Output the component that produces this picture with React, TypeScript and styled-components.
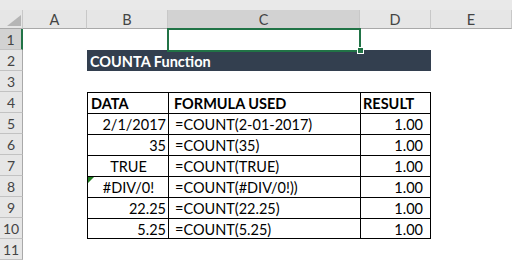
import React, { FC } from 'react'
import styled, { createGlobalStyle, css } from 'styled-components'

const GlobalStyle = createGlobalStyle`
  html, body {
    margin: 0;
    padding: 0;
    background: #ffffff;
  }
  body {
    width: 512px;
    height: 261px;
    overflow: hidden;
  }
`

const GREEN = '#217346'

const Window = styled.div`
  width: 512px;
  height: 261px;
  display: flex;
  flex-direction: column;
  overflow: hidden;
  background: #ffffff;
`

const TopStrip = styled.div`
  height: 10px;
  background: #e9e9e9;
  flex-shrink: 0;
`

const Sheet = styled.div`
  display: grid;
  grid-template-columns: 23px 64px 81px 192px 71px 81px;
  grid-template-rows: 19px repeat(11, 21px);
`

const Corner = styled.div`
  background: #e6e6e6;
  border-right: 1px solid #c8c8c8;
  border-bottom: 1px solid #a9a9a9;
  box-sizing: border-box;
  display: flex;
  align-items: flex-end;
  justify-content: flex-end;
  padding: 0 1px 2px 0;
`

const ColHead = styled.div<{ $selected?: boolean }>`
  background: ${(p) => (p.$selected ? '#d2d2d2' : '#e6e6e6')};
  border-right: 1px solid #c8c8c8;
  border-bottom: 1px solid ${(p) => (p.$selected ? GREEN : '#a9a9a9')};
  box-sizing: border-box;
  display: flex;
  align-items: center;
  justify-content: center;
  font-family: 'Lato', 'Liberation Sans', sans-serif;
  font-size: 14.5px;
  color: #444444;
`

const RowHead = styled.div<{ $selected?: boolean }>`
  background: ${(p) => (p.$selected ? '#d2d2d2' : '#e6e6e6')};
  border-right: ${(p) => (p.$selected ? `2px solid ${GREEN}` : '1px solid #a9a9a9')};
  border-bottom: 1px solid #c2c2c2;
  box-sizing: border-box;
  display: flex;
  align-items: center;
  justify-content: center;
  font-family: 'Lato', 'Liberation Sans', sans-serif;
  font-size: 14px;
  color: #444444;
`

type Align = 'left' | 'center' | 'right'

const Cell = styled.div<{
  $align?: Align
  $bold?: boolean
  $table?: boolean
  $lastCol?: boolean
  $lastRow?: boolean
  $padL?: number
  $padR?: number
}>`
  position: relative;
  box-sizing: border-box;
  display: flex;
  align-items: center;
  justify-content: ${(p) =>
    p.$align === 'right' ? 'flex-end' : p.$align === 'center' ? 'center' : 'flex-start'};
  padding: 1px ${(p) => p.$padR ?? 2}px 0 ${(p) => p.$padL ?? 3}px;
  font-family: 'Lato', 'Liberation Sans', sans-serif;
  font-size: 14.5px;
  font-weight: ${(p) => (p.$bold ? 700 : 400)};
  color: #000000;
  white-space: nowrap;
  ${(p) =>
    p.$table &&
    css`
      border-top: 1px solid #000000;
      border-left: 1px solid #000000;
    `}
  ${(p) => p.$lastCol && css`border-right: 1px solid #000000;`}
  ${(p) => p.$lastRow && css`border-bottom: 1px solid #000000;`}
`

const TitleBand = styled.div`
  grid-column: 3 / span 3;
  background: #333f4f;
  color: #ffffff;
  font-family: 'Lato', 'Liberation Sans', sans-serif;
  font-weight: 700;
  font-size: 14.5px;
  display: flex;
  align-items: center;
  padding: 1px 0 0 3px;
`

const Selection = styled.div`
  position: absolute;
  left: -1px;
  top: -1px;
  right: -1px;
  bottom: -2px;
  border: 2px solid ${GREEN};
  pointer-events: none;
`

const FillHandle = styled.div`
  position: absolute;
  right: -4px;
  bottom: -4px;
  width: 5px;
  height: 5px;
  background: ${GREEN};
  border: 1px solid #ffffff;
`

const ErrorMark = styled.div`
  position: absolute;
  top: 0;
  left: 0;
  width: 0;
  height: 0;
  border-top: 6px solid #1e7b1e;
  border-right: 6px solid transparent;
`

const columns = ['A', 'B', 'C', 'D', 'E']

type Row = {
  data: string
  align: Align
  formula: string
  result: string
  error?: boolean
}

const rows: Row[] = [
  { data: '2/1/2017', align: 'right', formula: '=COUNT(2-01-2017)', result: '1.00' },
  { data: '35', align: 'right', formula: '=COUNT(35)', result: '1.00' },
  { data: 'TRUE', align: 'center', formula: '=COUNT(TRUE)', result: '1.00' },
  { data: '#DIV/0!', align: 'center', formula: '=COUNT(#DIV/0!))', result: '1.00', error: true },
  { data: '22.25', align: 'right', formula: '=COUNT(22.25)', result: '1.00' },
  { data: '5.25', align: 'right', formula: '=COUNT(5.25)', result: '1.00' },
]

const App: FC = () => (
  <>
    <GlobalStyle />
    <Window>
      <TopStrip />
      <Sheet>
        <Corner>
          <svg width="14" height="11" viewBox="0 0 14 11">
            <polygon points="14,0 14,11 0,11" fill="#b5b5b5" />
          </svg>
        </Corner>
        {columns.map((c) => (
          <ColHead key={c} $selected={c === 'C'}>
            {c}
          </ColHead>
        ))}

        {/* row 1 */}
        <RowHead $selected>1</RowHead>
        <Cell />
        <Cell />
        <Cell>
          <Selection />
          <FillHandle />
        </Cell>
        <Cell />
        <Cell />

        {/* row 2 */}
        <RowHead>2</RowHead>
        <Cell />
        <TitleBand>COUNTA Function</TitleBand>
        <Cell />

        {/* row 3 */}
        <RowHead>3</RowHead>
        <Cell />
        <Cell />
        <Cell />
        <Cell />
        <Cell />

        {/* row 4 */}
        <RowHead>4</RowHead>
        <Cell />
        <Cell $table $bold>DATA</Cell>
        <Cell $table $bold $padL={5}>FORMULA USED</Cell>
        <Cell $table $lastCol $bold $padL={2}>RESULT</Cell>
        <Cell />

        {rows.map((r, i) => {
          const last = i === rows.length - 1
          return (
            <React.Fragment key={i}>
              <RowHead>{i + 5}</RowHead>
              <Cell />
              <Cell $table $lastRow={last} $align={r.align}>
                {r.error && <ErrorMark />}
                {r.data}
              </Cell>
              <Cell $table $lastRow={last} $padL={6}>
                {r.formula}
              </Cell>
              <Cell $table $lastCol $lastRow={last} $align="right" $padR={7}>
                {r.result}
              </Cell>
              <Cell />
            </React.Fragment>
          )
        })}

        {/* row 11 */}
        <RowHead>11</RowHead>
        <Cell />
        <Cell />
        <Cell />
        <Cell />
        <Cell />
      </Sheet>
    </Window>
  </>
)

export default App
